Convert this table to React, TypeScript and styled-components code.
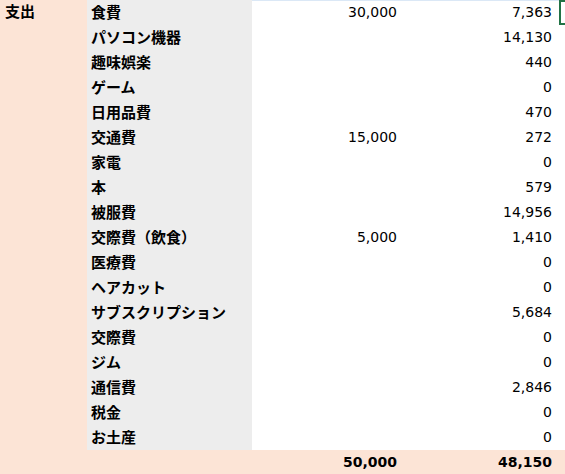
import React from "react";
import styled, { createGlobalStyle } from "styled-components";

const Global = createGlobalStyle`
  html, body { margin: 0; padding: 0; background: #ffffff; overflow: hidden; }
  #root { width: 565px; height: 474px; }
`;

const PEACH = "#fce4d6";
const GRAY = "#ededed";

const Sheet = styled.div`
  display: grid;
  grid-template-columns: 87px 165px 151px 156px 6px;
  grid-auto-rows: 25px;
  width: 565px;
  height: 474px;
  background: #ffffff;
`;

const GroupCell = styled.div`
  grid-column: 1;
  grid-row: 1 / span 18;
  background: ${PEACH};
  padding: 2px 0 0 5px;
  font-family: "Noto Sans CJK JP", sans-serif;
  font-weight: 700;
  font-size: 15px;
  line-height: 18px;
  color: #000;
`;

const LabelCell = styled.div`
  grid-column: 2;
  background: ${GRAY};
  display: flex;
  align-items: center;
  padding: 0 0 2px 4px;
  font-family: "Noto Sans CJK JP", sans-serif;
  font-weight: 700;
  font-size: 15px;
  color: #000;
  white-space: nowrap;
`;

const NumCell = styled.div<{ $col: number; $top?: boolean; $pad: number }>`
  grid-column: ${(p) => p.$col};
  display: flex;
  align-items: center;
  justify-content: flex-end;
  padding-right: ${(p) => p.$pad}px;
  padding-bottom: 1px;
  font-family: "DejaVu Sans", Verdana, sans-serif;
  font-size: 14px;
  color: #000;
  box-shadow: ${(p) => (p.$top ? "inset 0 1px 0 #dbe8f6" : "none")};
`;

const EdgeCell = styled.div`
  grid-column: 5;
  position: relative;
`;

const Selection = styled.div`
  position: absolute;
  left: 0;
  top: 0;
  width: 12px;
  height: 25px;
  box-sizing: border-box;
  border: 2px solid #217346;
`;

const TotalRow = styled.div`
  grid-column: 1 / -1;
  display: grid;
  grid-template-columns: subgrid;
  background: ${PEACH};
  height: 24px;
`;

const TotalNum = styled.div<{ $col: number; $pad: number }>`
  grid-column: ${(p) => p.$col};
  display: flex;
  align-items: center;
  justify-content: flex-end;
  padding-right: ${(p) => p.$pad}px;
  font-family: "DejaVu Sans", Verdana, sans-serif;
  font-weight: 700;
  font-size: 14px;
  color: #000;
`;

const rows: [string, string, string][] = [
  ["食費", "30,000", "7,363"],
  ["パソコン機器", "", "14,130"],
  ["趣味娯楽", "", "440"],
  ["ゲーム", "", "0"],
  ["日用品費", "", "470"],
  ["交通費", "15,000", "272"],
  ["家電", "", "0"],
  ["本", "", "579"],
  ["被服費", "", "14,956"],
  ["交際費（飲食）", "5,000", "1,410"],
  ["医療費", "", "0"],
  ["ヘアカット", "", "0"],
  ["サブスクリプション", "", "5,684"],
  ["交際費", "", "0"],
  ["ジム", "", "0"],
  ["通信費", "", "2,846"],
  ["税金", "", "0"],
  ["お土産", "", "0"],
];

export default function App() {
  return (
    <>
      <Global />
      <Sheet>
        <GroupCell>支出</GroupCell>
        {rows.map(([label, budget, actual], i) => (
          <React.Fragment key={label + i}>
            <LabelCell style={{ gridRow: i + 1 }}>{label}</LabelCell>
            <NumCell $col={3} $pad={6} $top={i === 0} style={{ gridRow: i + 1 }}>
              {budget}
            </NumCell>
            <NumCell $col={4} $pad={7} $top={i === 0} style={{ gridRow: i + 1 }}>
              {actual}
            </NumCell>
            <EdgeCell style={{ gridRow: i + 1 }}>
              {i === 0 && <Selection />}
            </EdgeCell>
          </React.Fragment>
        ))}
        <TotalRow>
          <TotalNum $col={3} $pad={6}>50,000</TotalNum>
          <TotalNum $col={4} $pad={7}>48,150</TotalNum>
        </TotalRow>
      </Sheet>
    </>
  );
}
